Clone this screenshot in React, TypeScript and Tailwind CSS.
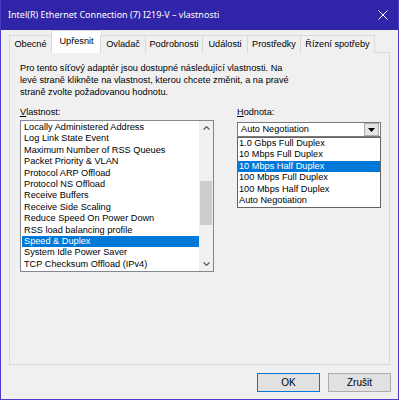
import { useState } from "react";

const tabs = [
  { name: "Obecné", w: "w-[43px]" },
  { name: "Upřesnit", w: "w-[47px]" },
  { name: "Ovladač", w: "w-[46px]" },
  { name: "Podrobnosti", w: "w-[58px]" },
  { name: "Události", w: "w-[46px]" },
  { name: "Prostředky", w: "w-[54px]" },
  { name: "Řízení spotřeby", w: "w-[75px]" },
];

const properties = [
  "Locally Administered Address",
  "Log Link State Event",
  "Maximum Number of RSS Queues",
  "Packet Priority & VLAN",
  "Protocol ARP Offload",
  "Protocol NS Offload",
  "Receive Buffers",
  "Receive Side Scaling",
  "Reduce Speed On Power Down",
  "RSS load balancing profile",
  "Speed & Duplex",
  "System Idle Power Saver",
  "TCP Checksum Offload (IPv4)",
];

const values = [
  "1.0 Gbps Full Duplex",
  "10 Mbps Full Duplex",
  "10 Mbps Half Duplex",
  "100 Mbps Full Duplex",
  "100 Mbps Half Duplex",
  "Auto Negotiation",
];

function Chevron({ up }: { up?: boolean }) {
  return (
    <svg width="7" height="4" viewBox="0 0 7 4">
      <path
        d={up ? "M0.5 3.5 L3.5 0.7 L6.5 3.5" : "M0.5 0.5 L3.5 3.3 L6.5 0.5"}
        fill="none"
        stroke="#606060"
        strokeWidth="1.2"
      />
    </svg>
  );
}

function PropertyList() {
  const [selected, setSelected] = useState("Speed & Duplex");

  return (
    <div className="flex w-[194px] h-[152px] border border-[#828790] bg-white">
      <ul className="flex-1 pt-[1px] pl-[1px]">
        {properties.map((p) => (
          <li
            key={p}
            onClick={() => setSelected(p)}
            className={`h-[11.4px] leading-[11.4px] pl-[2px] whitespace-nowrap ${
              p === selected ? "bg-[#0078d7] text-white" : "text-black"
            }`}
          >
            {p}
          </li>
        ))}
      </ul>
      <div className="w-[14px] bg-[#f0f0f0] flex flex-col">
        <div className="h-[14px] flex items-center justify-center">
          <Chevron up />
        </div>
        <div className="h-[46px]" />
        <div className="h-[44px] mx-[1px] bg-[#cdcdcd]" />
        <div className="flex-1" />
        <div className="h-[14px] flex items-center justify-center">
          <Chevron />
        </div>
      </div>
    </div>
  );
}

function ValueCombo() {
  const [value, setValue] = useState("10 Mbps Half Duplex");

  return (
    <div className="relative w-[144px]">
      <div className="h-[15px] border border-[#7a7a7a] bg-white flex items-center">
        <span className="flex-1 pl-[3px] whitespace-nowrap">Auto Negotiation</span>
        <div className="w-[15px] h-[13px] mr-[1px] bg-[#e5e5e5] border border-[#adadad] flex items-center justify-center">
          <svg width="7" height="4" viewBox="0 0 7 4">
            <path d="M0 0 H7 L3.5 4 Z" fill="#000" />
          </svg>
        </div>
      </div>
      <ul className="absolute left-0 top-[15px] w-[144px] border border-[#646464] bg-white pb-[1px]">
        {values.map((v) => (
          <li
            key={v}
            onClick={() => setValue(v)}
            className={`h-[11.4px] leading-[11.4px] pl-[1px] whitespace-nowrap ${
              v === value ? "bg-[#0078d7] text-white" : "text-black"
            }`}
          >
            {v}
          </li>
        ))}
      </ul>
    </div>
  );
}

export default function App() {
  return (
    <div
      className="w-[399px] h-[400px] bg-[#f0f0f0] border-x border-b border-[#4a3cc6] flex flex-col text-[9.2px] text-black overflow-hidden"
      style={{ fontFamily: '"Liberation Sans", Arial, sans-serif' }}
    >
      <div className="h-[30px] shrink-0 bg-[#3024a8] text-white flex items-center justify-between pl-[7px] pr-[10px]">
        <span
          className="text-[9px]"
          style={{ fontFamily: '"Noto Sans", "Open Sans", sans-serif' }}
        >
          Intel(R) Ethernet Connection (7) I219-V – vlastnosti
        </span>
        <svg width="10" height="10" viewBox="0 0 10 10">
          <path d="M0.5 0.5 L9.5 9.5 M9.5 0.5 L0.5 9.5" stroke="#fff" strokeWidth="1" />
        </svg>
      </div>

      <div className="flex items-end h-[23px] pl-[8px] relative z-10">
        {tabs.map((t) => {
          const active = t.name === "Upřesnit";
          return (
            <div
              key={t.name}
              className={`${t.w} flex items-center justify-center border border-[#d9d9d9] whitespace-nowrap ${
                active
                  ? "h-[21px] bg-white border-b-white -mx-[1px] px-[1px] box-content"
                  : "h-[18px] bg-[#f0f0f0] -ml-[1px] first:ml-0 border-b-0"
              }`}
            >
              {t.name}
            </div>
          );
        })}
      </div>

      <div className="mx-[8px] -mt-[1px] h-[313px] border border-[#d9d9d9] bg-[#f0f0f0] pt-[9px] px-[10px]">
        <p className="leading-[12px]">
          Pro tento síťový adaptér jsou dostupné následující vlastnosti. Na
          <br />
          levé straně klikněte na vlastnost, kterou chcete změnit, a na pravé
          <br />
          straně zvolte požadovanou hodnotu.
        </p>

        <div className="flex mt-[9px]">
          <div>
            <div className="mb-[2px] leading-[11px]">
              <span className="underline">V</span>lastnost:
            </div>
            <PropertyList />
          </div>
          <div className="ml-[23px]">
            <div className="mb-[4px] leading-[11px]">
              <span className="underline">H</span>odnota:
            </div>
            <ValueCombo />
          </div>
        </div>
      </div>

      <div className="flex justify-end gap-[8px] pr-[7px] mt-[8px]">
        <button className="w-[63px] h-[19px] border-[1.5px] border-[#0078d7] bg-[#e1e1e1] text-[10px]">
          OK
        </button>
        <button className="w-[63px] h-[19px] border border-[#adadad] bg-[#e1e1e1] text-[10px]">
          Zrušit
        </button>
      </div>
    </div>
  );
}
